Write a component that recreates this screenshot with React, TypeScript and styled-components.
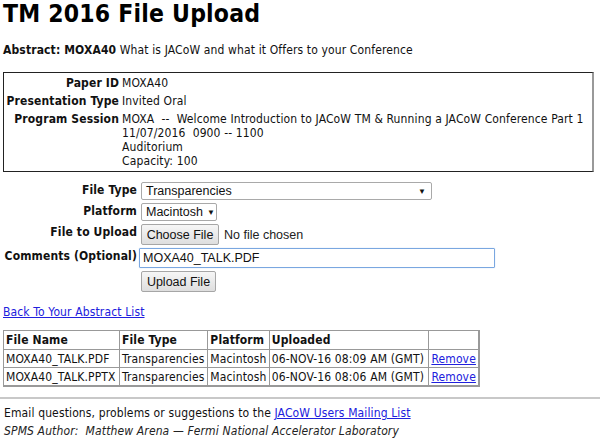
import React from "react";
import styled, { createGlobalStyle } from "styled-components";

const Global = createGlobalStyle`
  html, body { margin: 0; padding: 0; background: #fff; }
  body { font-family: "DejaVu Sans Condensed", "DejaVu Sans", Verdana, sans-serif; font-size: 12px; letter-spacing: 0.13px; color: #111; }
`;

const Page = styled.div`
  padding: 0 3px;
  display: flex;
  flex-direction: column;
`;

const Title = styled.h1`
  margin: 0;
  padding-top: 0;
  font-size: 24.5px;
  line-height: 27px;
  font-weight: bold;
  letter-spacing: 0.2px;
  color: #000;
`;

const Abstract = styled.p`
  margin: 16px 0 0 0;
  line-height: 14px;
`;

const InfoBox = styled.div`
  margin-top: 15px;
  width: 588px;
  border: 1px solid #222;
  border-right: 2px solid #999;
  padding: 3px 0 3px 0;
  display: grid;
  grid-template-columns: 115px 1fr;
  column-gap: 3px;
  row-gap: 4px;
`;

const InfoLabel = styled.div`
  text-align: right;
  font-weight: bold;
  line-height: 14px;
`;

const InfoValue = styled.div`
  line-height: 14px;
  white-space: pre;
`;

const Form = styled.div`
  margin-top: 10px;
  display: grid;
  grid-template-columns: 134px auto;
  column-gap: 4px;
  row-gap: 3px;
  justify-items: start;
  align-items: start;
`;

const FormLabel = styled.div`
  justify-self: end;
  font-weight: bold;
  line-height: 14px;
  padding-top: 1px;
`;

const Control = styled.div`
  display: flex;
  align-items: center;
  gap: 5px;
  font-family: "Liberation Sans", Arial, sans-serif;
  font-size: 12.5px;
  letter-spacing: 0;
  color: #222;
`;

const Select = styled.div<{ $w: number }>`
  width: ${(p) => p.$w}px;
  height: 18px;
  box-sizing: border-box;
  border: 1px solid #a9a9a9;
  border-radius: 2px;
  display: flex;
  align-items: center;
  justify-content: space-between;
  gap: 4px;
  padding: 0 5px 0 4px;
  font-family: "Liberation Sans", Arial, sans-serif;
  font-size: 12.5px;
  letter-spacing: 0;
  color: #111;
  background: #fff;
`;

const Caret = styled.span`
  font-size: 8px;
  color: #111;
`;

const Button = styled.div<{ $w: number }>`
  width: ${(p) => p.$w}px;
  height: 21px;
  box-sizing: border-box;
  border: 1px solid #a6a6a6;
  border-radius: 2px;
  background: linear-gradient(#f6f6f6, #dedede);
  display: flex;
  align-items: center;
  justify-content: center;
  font-family: "Liberation Sans", Arial, sans-serif;
  font-size: 12.5px;
  letter-spacing: 0;
  color: #111;
`;

const TextInput = styled.div`
  width: 356px;
  height: 20px;
  margin-left: -2px;
  box-sizing: border-box;
  border: 1px solid #7aa7e0;
  box-shadow: 0 0 1px #9cc0ee;
  border-radius: 1px;
  display: flex;
  align-items: center;
  padding-left: 3px;
  font-family: "Liberation Sans", Arial, sans-serif;
  font-size: 12.5px;
  letter-spacing: 0;
  color: #111;
`;

const Link = styled.a`
  color: #2020dd;
  text-decoration: underline;
  cursor: pointer;
`;

const BackLink = styled.div`
  margin-top: 13px;
  line-height: 14px;
`;

const Table = styled.table`
  margin-top: 11px;
  border-collapse: collapse;
  border-top: 1px solid #222;
  border-left: 1px solid #222;
  border-right: 2px solid #999;
  border-bottom: 2px solid #999;
  width: 477px;
`;

const Th = styled.th`
  text-align: left;
  font-weight: bold;
  border: 1px solid #999;
  padding: 2px 1px 2px 2px;
  line-height: 14px;
  white-space: nowrap;
`;

const Td = styled.td`
  border: 1px solid #999;
  padding: 2px 1px 1px 2px;
  line-height: 14px;
  white-space: nowrap;
`;

const Rule = styled.hr`
  margin: 10px -3px 0 -3px;
  border: none;
  border-top: 2px solid #c8c8c8;
`;

const Footer = styled.div`
  margin-top: 5px;
  line-height: 18px;
  padding-left: 1px;
`;

const Credit = styled.div`
  font-style: italic;
  color: #222;
`;

const files = [
  { name: "MOXA40_TALK.PDF", type: "Transparencies", platform: "Macintosh", uploaded: "06-NOV-16 08:09 AM (GMT)" },
  { name: "MOXA40_TALK.PPTX", type: "Transparencies", platform: "Macintosh", uploaded: "06-NOV-16 08:06 AM (GMT)" },
];

export default function App() {
  return (
    <>
      <Global />
      <Page>
        <Title>TM 2016 File Upload</Title>
        <Abstract>
          <b>Abstract: MOXA40</b> What is JACoW and what it Offers to your Conference
        </Abstract>
        <InfoBox>
          <InfoLabel>Paper ID</InfoLabel>
          <InfoValue>MOXA40</InfoValue>
          <InfoLabel>Presentation Type</InfoLabel>
          <InfoValue>Invited Oral</InfoValue>
          <InfoLabel>Program Session</InfoLabel>
          <InfoValue>
            {"MOXA  --  Welcome Introduction to JACoW TM & Running a JACoW Conference Part 1\n11/07/2016  0900 -- 1100\nAuditorium\nCapacity: 100"}
          </InfoValue>
        </InfoBox>
        <Form>
          <FormLabel>File Type</FormLabel>
          <Select $w={291}>
            <span>Transparencies</span>
            <Caret>▼</Caret>
          </Select>
          <FormLabel>Platform</FormLabel>
          <Select $w={76}>
            <span>Macintosh</span>
            <Caret>▼</Caret>
          </Select>
          <FormLabel>File to Upload</FormLabel>
          <Control>
            <Button $w={78}>Choose File</Button>
            <span>No file chosen</span>
          </Control>
          <FormLabel>Comments (Optional)</FormLabel>
          <TextInput>MOXA40_TALK.PDF</TextInput>
          <span />
          <Button $w={75}>Upload File</Button>
        </Form>
        <BackLink>
          <Link>Back To Your Abstract List</Link>
        </BackLink>
        <Table>
          <thead>
            <tr>
              <Th>File Name</Th>
              <Th>File Type</Th>
              <Th>Platform</Th>
              <Th>Uploaded</Th>
              <Th></Th>
            </tr>
          </thead>
          <tbody>
            {files.map((f) => (
              <tr key={f.name}>
                <Td>{f.name}</Td>
                <Td>{f.type}</Td>
                <Td>{f.platform}</Td>
                <Td>{f.uploaded}</Td>
                <Td>
                  <Link>Remove</Link>
                </Td>
              </tr>
            ))}
          </tbody>
        </Table>
        <Rule />
        <Footer>
          <div>
            Email questions, problems or suggestions to the <Link>JACoW Users Mailing List</Link>
          </div>
          <Credit>SPMS Author:&nbsp; Matthew Arena — Fermi National Accelerator Laboratory</Credit>
        </Footer>
      </Page>
    </>
  );
}
